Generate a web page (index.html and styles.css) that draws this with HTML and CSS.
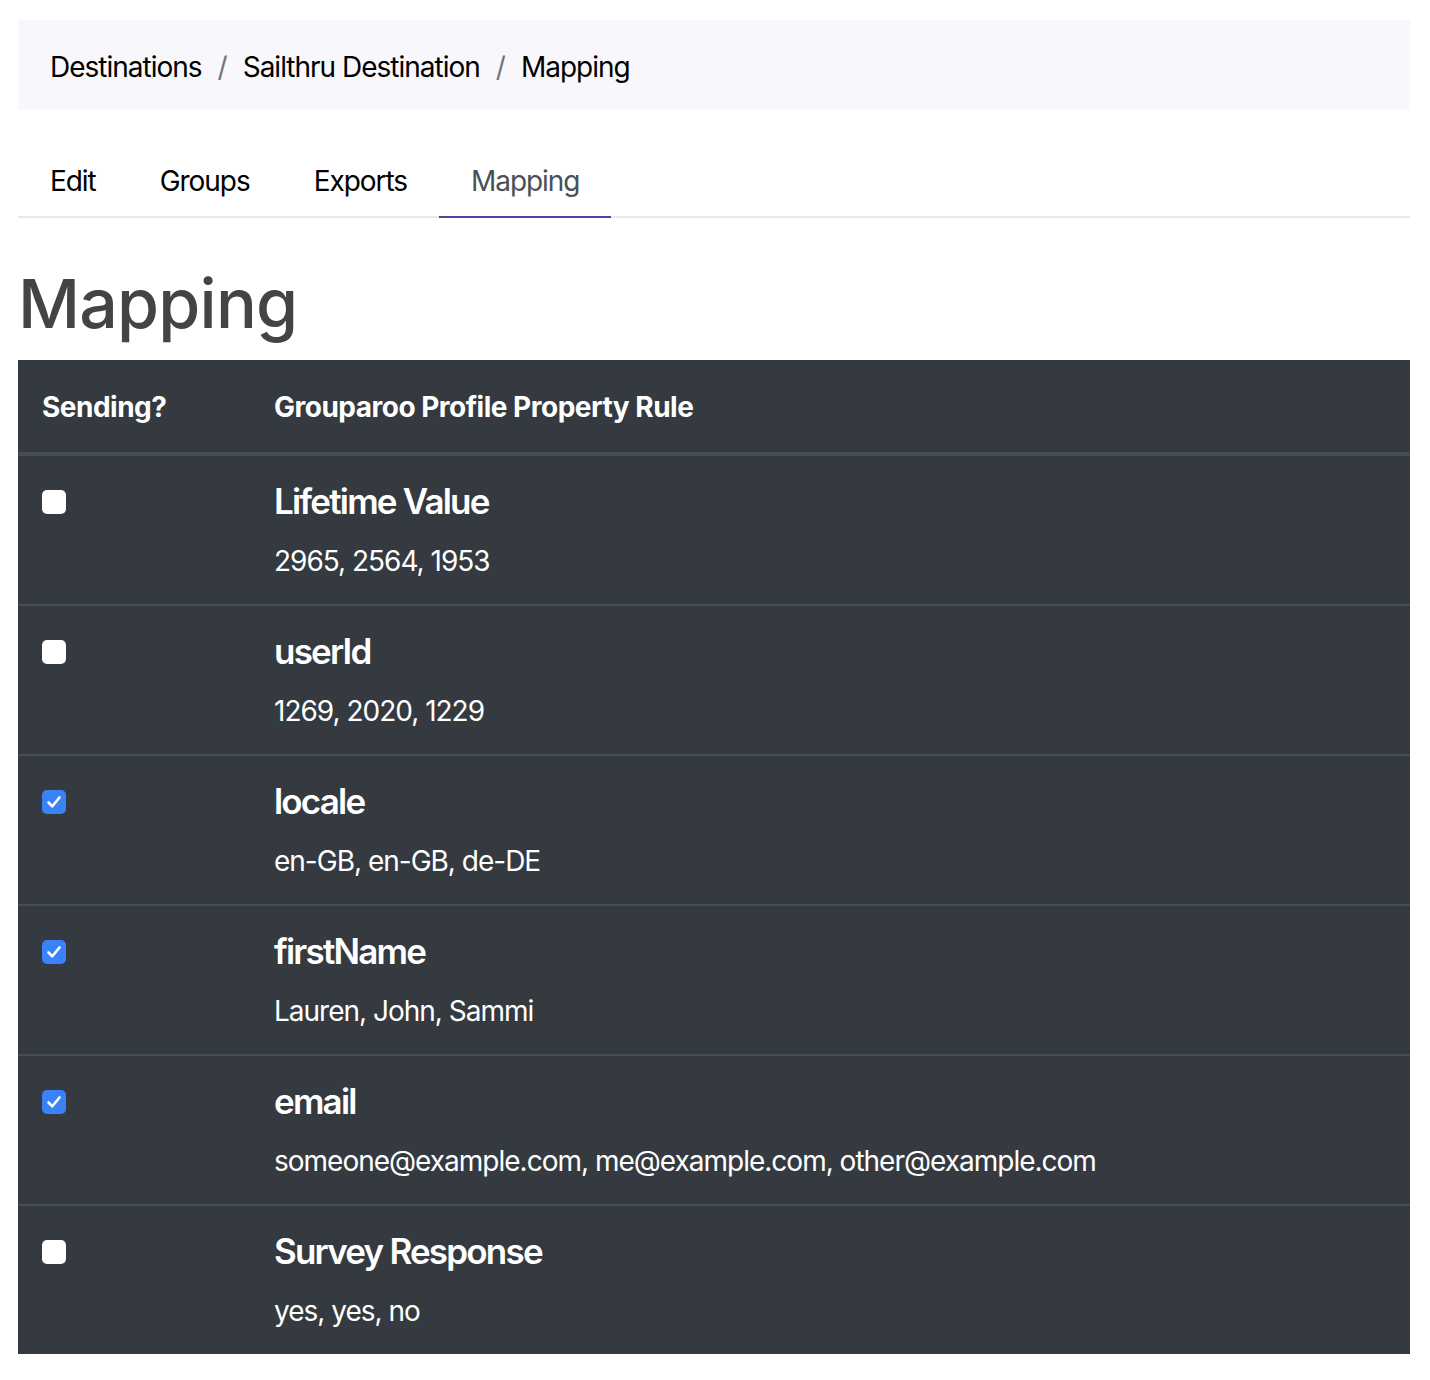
FILE: index.html
```html
<!DOCTYPE html>
<html lang="en">
<head>
<meta charset="utf-8">
<title>Mapping</title>
<link rel="stylesheet" href="styles.css">
</head>
<body>
<div class="page">
  <nav class="breadcrumb">
    <span class="crumb">Destinations</span>
    <span class="sep">/</span>
    <span class="crumb">Sailthru Destination</span>
    <span class="sep">/</span>
    <span class="crumb">Mapping</span>
  </nav>

  <ul class="tabs">
    <li class="tab">Edit</li>
    <li class="tab">Groups</li>
    <li class="tab">Exports</li>
    <li class="tab active">Mapping</li>
  </ul>

  <h1 class="title">Mapping</h1>

  <table class="mapping">
    <thead>
      <tr>
        <th class="col-send">Sending?</th>
        <th>Grouparoo Profile Property Rule</th>
      </tr>
    </thead>
    <tbody>
      <tr>
        <td class="col-send"><span class="check"></span></td>
        <td><div class="rule">Lifetime Value</div><div class="samples">2965, 2564, 1953</div></td>
      </tr>
      <tr>
        <td class="col-send"><span class="check"></span></td>
        <td><div class="rule">userId</div><div class="samples">1269, 2020, 1229</div></td>
      </tr>
      <tr>
        <td class="col-send"><span class="check on"><svg viewBox="0 0 24 24" width="24" height="24"><path d="M6.5 12.5 L10.3 16.3 L17.5 7.5" fill="none" stroke="#fff" stroke-width="2.6" stroke-linecap="round" stroke-linejoin="round"/></svg></span></td>
        <td><div class="rule">locale</div><div class="samples">en-GB, en-GB, de-DE</div></td>
      </tr>
      <tr>
        <td class="col-send"><span class="check on"><svg viewBox="0 0 24 24" width="24" height="24"><path d="M6.5 12.5 L10.3 16.3 L17.5 7.5" fill="none" stroke="#fff" stroke-width="2.6" stroke-linecap="round" stroke-linejoin="round"/></svg></span></td>
        <td><div class="rule">firstName</div><div class="samples">Lauren, John, Sammi</div></td>
      </tr>
      <tr>
        <td class="col-send"><span class="check on"><svg viewBox="0 0 24 24" width="24" height="24"><path d="M6.5 12.5 L10.3 16.3 L17.5 7.5" fill="none" stroke="#fff" stroke-width="2.6" stroke-linecap="round" stroke-linejoin="round"/></svg></span></td>
        <td><div class="rule">email</div><div class="samples">someone@example.com, me@example.com, other@example.com</div></td>
      </tr>
      <tr>
        <td class="col-send"><span class="check"></span></td>
        <td><div class="rule">Survey Response</div><div class="samples">yes, yes, no</div></td>
      </tr>
    </tbody>
  </table>
</div>
</body>
</html>
```

FILE: styles.css
```css
html, body {
  margin: 0;
  padding: 0;
  background: #fff;
}

body {
  font-family: Inter, "Noto Sans", "Liberation Sans", sans-serif;
  font-size: 28px;
  line-height: 42px;
  color: #000;
}

.page {
  padding: 20px 20px 0 18px;
}

.breadcrumb {
  display: flex;
  align-items: center;
  background: #f8f8fc;
  padding: 26px 32px 22px 32px;
  margin: 0 0 32px 0;
  letter-spacing: -1px;
}

.sep {
  color: #6c757d;
  padding: 0 16px;
}

.tabs {
  list-style: none;
  margin: 0;
  padding: 0;
  display: flex;
  border-bottom: 2px solid #e9e9ec;
}

.tab {
  padding: 18px 32px 14px 32px;
  margin-bottom: -2px;
  border-bottom: 2px solid transparent;
  letter-spacing: -1.05px;
  color: #000;
}

.tab.active {
  color: #495057;
  border-bottom-color: #5b3aa6;
}

.title {
  font-size: 68px;
  line-height: 82px;
  font-weight: 500;
  color: #444;
  margin: 44px 0 16px 0;
  letter-spacing: -0.8px;
}

.mapping {
  width: 100%;
  border-collapse: collapse;
  background: #343a40;
  color: #fff;
}

.mapping th {
  text-align: left;
  font-weight: 700;
  padding: 26px 24px 24px 24px;
  border-bottom: 4px solid #454d55;
  letter-spacing: -0.5px;
  vertical-align: top;
}

.mapping td {
  padding: 24px 24px 22px 24px;
  border-top: 2px solid #454d55;
  vertical-align: top;
}

.mapping tbody tr:first-child td {
  border-top: 0;
}

.col-send {
  width: 184px;
}

.check {
  display: block;
  width: 24px;
  height: 24px;
  margin-top: 10px;
  border-radius: 5px;
  background: #fff;
}

.check.on {
  background: #3a82f7;
}

.check svg {
  display: block;
}

.rule {
  font-size: 35px;
  line-height: 42px;
  font-weight: 600;
  letter-spacing: -1.8px;
  margin-bottom: 18px;
}

.samples {
  font-size: 28px;
  line-height: 42px;
  letter-spacing: -1px;
}
```
